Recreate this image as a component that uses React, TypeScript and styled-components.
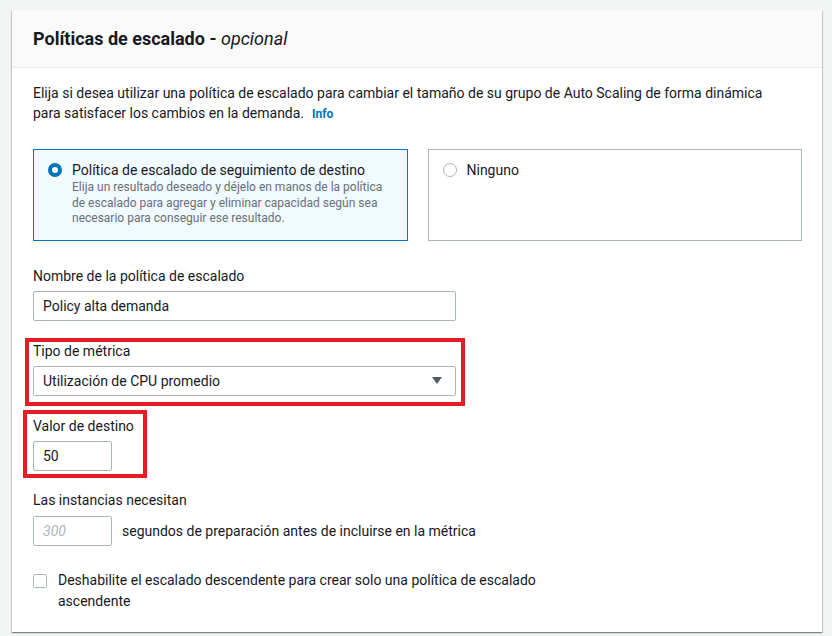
import styled, { createGlobalStyle, css } from 'styled-components';

const GlobalStyle = createGlobalStyle`
  body {
    margin: 0;
    background: #f2f3f3;
    font-family: Roboto, "Liberation Sans", sans-serif;
    color: #16191f;
  }
`;

const Page = styled.div`
  padding: 10px 10px 5px 12px;
`;

const Card = styled.section`
  width: 810px;
  background: #fff;
  box-shadow: 0 1px 1px 0 rgba(0, 28, 36, 0.3), 1px 1px 1px 0 rgba(0, 28, 36, 0.15),
    -1px 1px 1px 0 rgba(0, 28, 36, 0.15);
`;

const CardHeader = styled.header`
  height: 58px;
  box-sizing: border-box;
  display: flex;
  align-items: center;
  padding: 0 21px;
  background: #fafafa;
  border-bottom: 1px solid #eaeded;
`;

const Title = styled.h2`
  margin: 0;
  font-size: 18px;
  line-height: 22px;
  font-weight: 700;
  em {
    font-weight: 400;
  }
`;

const CardBody = styled.div`
  padding: 15px 20px 20px 21px;
`;

const Description = styled.p`
  margin: 0;
  font-size: 14px;
  line-height: 20px;
`;

const InfoLink = styled.a`
  margin-left: 8px;
  font-size: 12px;
  font-weight: 700;
  color: #0073bb;
  text-decoration: none;
`;

const TileGrid = styled.div`
  display: grid;
  grid-template-columns: 1fr 1fr;
  gap: 20px;
  margin-top: 25px;
`;

const Tile = styled.div<{ $selected?: boolean }>`
  display: flex;
  gap: 10px;
  padding: 10px 14px 13px;
  border: 1px solid ${p => (p.$selected ? '#0073bb' : '#aab7b8')};
  background: ${p => (p.$selected ? '#f1faff' : '#fff')};
`;

const Radio = styled.span<{ $checked?: boolean }>`
  flex: none;
  width: 14px;
  height: 14px;
  margin-top: 3px;
  box-sizing: border-box;
  border-radius: 50%;
  background: #fff;
  border: ${p => (p.$checked ? '4px solid #0073bb' : '1px solid #aab7b8')};
`;

const TileTitle = styled.div`
  font-size: 14px;
  line-height: 20px;
`;

const TileText = styled.div`
  font-size: 12px;
  line-height: 15.5px;
  color: #687078;
`;

const Field = styled.div<{ $width?: number; $mark?: [number, number, number, number] }>`
  position: relative;
  margin-top: 19px;
  width: ${p => (p.$width ? `${p.$width}px` : 'auto')};
  ${p =>
    p.$mark &&
    css`
      &::after {
        content: '';
        position: absolute;
        top: ${-p.$mark[0]}px;
        right: ${-p.$mark[1]}px;
        bottom: ${-p.$mark[2]}px;
        left: ${-p.$mark[3]}px;
        border: 4px solid #e31c25;
        pointer-events: none;
      }
    `}
`;

const FirstField = styled(Field)`
  margin-top: 24px;
`;

const Label = styled.div`
  font-size: 14px;
  line-height: 22px;
  white-space: nowrap;
`;

const inputBox = css`
  display: flex;
  align-items: center;
  height: 30px;
  box-sizing: border-box;
  margin-top: 4px;
  padding: 0 9px;
  border: 1px solid #aab7b8;
  border-radius: 2px;
  background: #fff;
  font-size: 14px;
`;

const Input = styled.div<{ $width: number; $placeholder?: boolean }>`
  ${inputBox};
  width: ${p => p.$width}px;
  ${p =>
    p.$placeholder &&
    css`
      color: #aab7b8;
      font-style: italic;
    `}
`;

const Select = styled.div`
  ${inputBox};
  width: 423px;
  justify-content: space-between;
  padding-right: 13px;
`;

const InlineRow = styled.div`
  display: flex;
  align-items: center;
  gap: 10px;
  font-size: 14px;
  ${Input} {
    margin-top: 0;
  }
`;

const Stack = styled.div`
  display: flex;
  flex-direction: column;
  gap: 5px;
  margin-top: 18px;
`;

const CheckRow = styled.label`
  display: flex;
  gap: 11px;
  margin-top: 24px;
  font-size: 14px;
  line-height: 21px;
  span:last-child {
    max-width: 490px;
  }
`;

const Checkbox = styled.span`
  flex: none;
  width: 14px;
  height: 14px;
  margin-top: 4px;
  box-sizing: border-box;
  border: 1px solid #aab7b8;
  border-radius: 2px;
  background: #fff;
`;

function App() {
  return (
    <Page>
      <GlobalStyle />
      <Card>
        <CardHeader>
          <Title>
            Políticas de escalado - <em>opcional</em>
          </Title>
        </CardHeader>
        <CardBody>
          <Description>
            Elija si desea utilizar una política de escalado para cambiar el tamaño de su grupo de Auto Scaling de forma dinámica
            <br />
            para satisfacer los cambios en la demanda.
            <InfoLink>Info</InfoLink>
          </Description>

          <TileGrid>
            <Tile $selected>
              <Radio $checked />
              <div>
                <TileTitle>Política de escalado de seguimiento de destino</TileTitle>
                <TileText>
                  Elija un resultado deseado y déjelo en manos de la política
                  <br />
                  de escalado para agregar y eliminar capacidad según sea
                  <br />
                  necesario para conseguir ese resultado.
                </TileText>
              </div>
            </Tile>
            <Tile>
              <Radio />
              <TileTitle>Ninguno</TileTitle>
            </Tile>
          </TileGrid>

          <FirstField>
            <Label>Nombre de la política de escalado</Label>
            <Input $width={423}>Policy alta demanda</Input>
          </FirstField>

          <Field $width={423} $mark={[2, 9, 10, 8]}>
            <Label>Tipo de métrica</Label>
            <Select>
              Utilización de CPU promedio
              <svg width="10" height="7" viewBox="0 0 10 7">
                <path d="M0 0h10L5 7z" fill="#545b64" />
              </svg>
            </Select>
          </Field>

          <Field $width={79} $mark={[5, 35, 7, 10]}>
            <Label>Valor de destino</Label>
            <Input $width={79}>50</Input>
          </Field>

          <Stack>
            <Label>Las instancias necesitan</Label>
            <InlineRow>
              <Input $width={79} $placeholder>
                300
              </Input>
              segundos de preparación antes de incluirse en la métrica
            </InlineRow>
          </Stack>

          <CheckRow>
            <Checkbox />
            <span>Deshabilite el escalado descendente para crear solo una política de escalado ascendente</span>
          </CheckRow>
        </CardBody>
      </Card>
    </Page>
  );
}

export default App;
